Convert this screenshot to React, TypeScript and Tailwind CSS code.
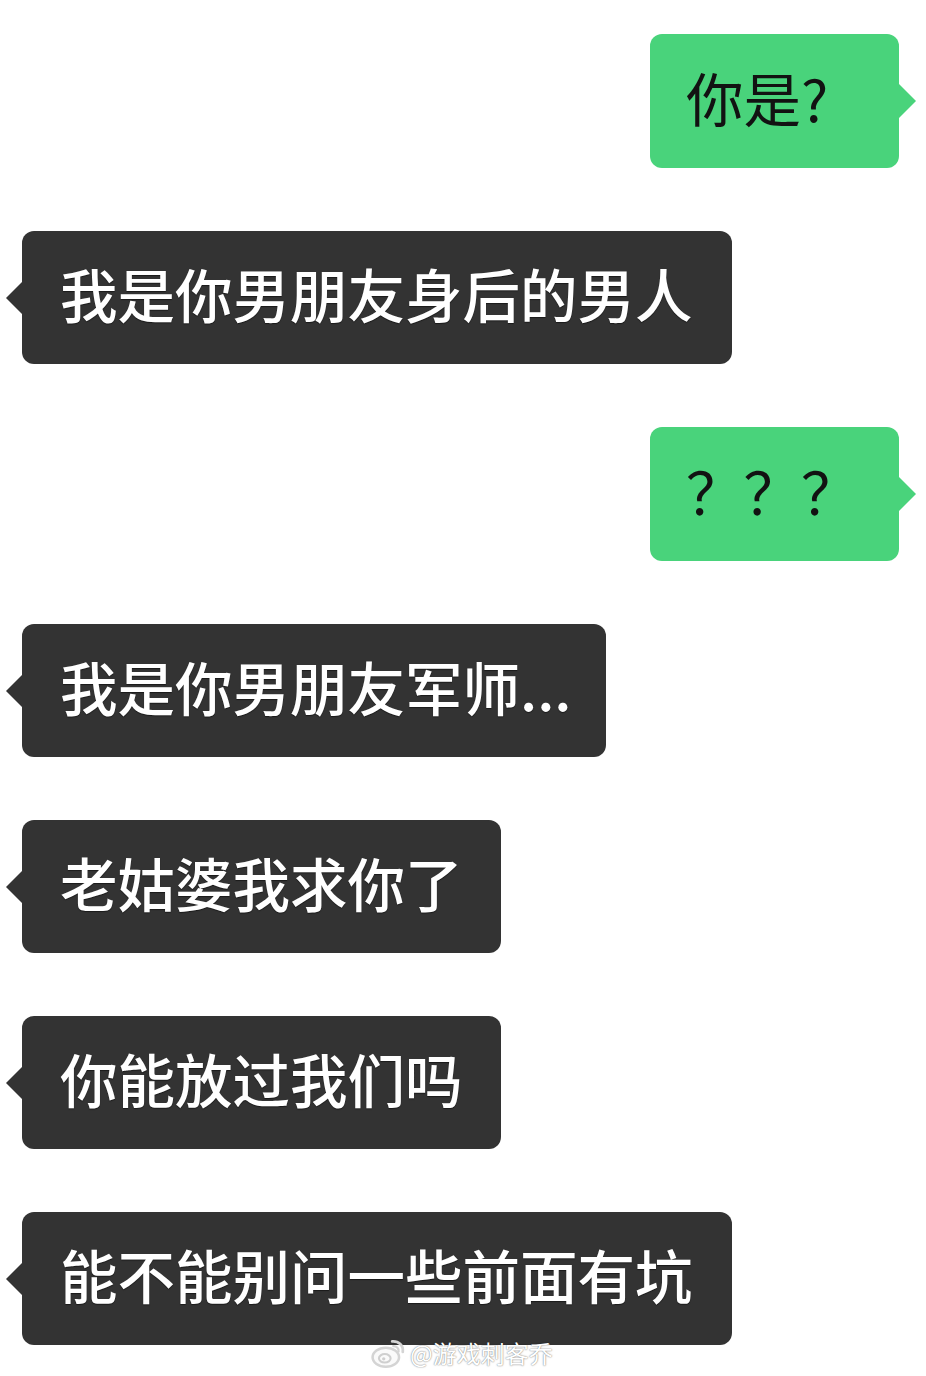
import React from "react";

const font = { fontFamily: '"Noto Sans CJK SC", "Noto Sans", sans-serif' };

const Mine = ({ text }: { text: string }) => (
  <div className="flex justify-end pr-[27px]">
    <div className="relative flex h-[134px] w-[249px] items-center rounded-[12px] bg-[#49d37b] pb-[7px] pl-[36px]">
      <span className="text-[57.5px] leading-none text-[#121212]">{text}</span>
      <div className="absolute right-[-17px] top-1/2 h-0 w-0 -translate-y-1/2 border-y-[17px] border-l-[17px] border-y-transparent border-l-[#49d37b]" />
    </div>
  </div>
);

const Theirs = ({ text, width }: { text: string; width: string }) => (
  <div className="flex justify-start pl-[22px]">
    <div
      className={`relative flex h-[133px] items-center rounded-[12px] bg-[#333333] pb-[8px] pl-[38px] ${width}`}
    >
      <span className="text-[57.5px] font-medium leading-none text-white [text-shadow:0_1px_1px_rgba(0,0,0,0.5)]">
        {text}
      </span>
      <div className="absolute left-[-16px] top-1/2 h-0 w-0 -translate-y-1/2 border-y-[16px] border-r-[16px] border-y-transparent border-r-[#333333]" />
    </div>
  </div>
);

const WeiboLogo = () => (
  <svg width="36" height="32" viewBox="0 0 34 30" fill="none">
    <ellipse cx="14" cy="19" rx="12.5" ry="9" stroke="#d4d4d4" strokeWidth="2.4" fill="#fafafa" />
    <ellipse cx="13" cy="20" rx="5.5" ry="4" stroke="#cfcfcf" strokeWidth="2" />
    <circle cx="12" cy="20.5" r="1.6" fill="#cfcfcf" />
    <path d="M20 4 C26 3.5 31 8 30 14" stroke="#d4d4d4" strokeWidth="2.6" strokeLinecap="round" />
    <path d="M21 8.5 C24.5 8.5 26.5 11 26 13.5" stroke="#d4d4d4" strokeWidth="2.2" strokeLinecap="round" />
  </svg>
);

export default function App() {
  return (
    <div className="relative h-[1376px] w-[926px] overflow-hidden bg-white" style={font}>
      <div className="flex flex-col gap-[63px] pt-[34px]">
        <Mine text="你是?" />
        <Theirs text="我是你男朋友身后的男人" width="w-[710px]" />
        <Mine text="？？？" />
        <Theirs text="我是你男朋友军师..." width="w-[584px]" />
        <Theirs text="老姑婆我求你了" width="w-[479px]" />
        <Theirs text="你能放过我们吗" width="w-[479px]" />
        <Theirs text="能不能别问一些前面有坑" width="w-[710px]" />
      </div>
      <div className="absolute left-[371px] top-[1337px] flex items-center gap-[3px]">
        <WeiboLogo />
        <span className="text-[24px] leading-none text-white [text-shadow:0_0_2px_rgba(0,0,0,0.35),0_0_1px_rgba(0,0,0,0.4)]">
          @游戏刺客乔
        </span>
      </div>
    </div>
  );
}
